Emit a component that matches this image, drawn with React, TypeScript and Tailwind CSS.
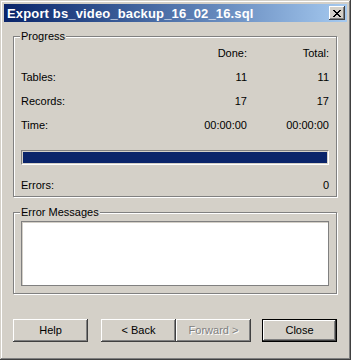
const font = { fontFamily: '"Liberation Sans", Arial, sans-serif' };

const raised =
  "bg-[#d4d0c8] shadow-[inset_-1px_-1px_#404040,inset_1px_1px_#ffffff,inset_-2px_-2px_#808080,inset_2px_2px_#d4d0c8]";

function GroupBox({ label, className, children }: { label: string; className?: string; children: React.ReactNode }) {
  return (
    <div
      className={
        "relative ml-[9px] w-[324px] border border-[#808080] shadow-[inset_1px_1px_#ffffff,1px_1px_#ffffff] " +
        (className ?? "")
      }
    >
      <span className="absolute left-[6px] top-[-8px] bg-[#d4d0c8] pr-[1px] pl-[1px] text-[11px] leading-[14px] text-black">
        {label}
      </span>
      {children}
    </div>
  );
}

function Row({ label, done, total }: { label: string; done?: string; total: string }) {
  return (
    <div className="flex h-[24px] items-center text-[11px] text-black">
      <span className="flex-1">{label}</span>
      <span className="w-[80px] text-right">{done}</span>
      <span className="w-[82px] text-right">{total}</span>
    </div>
  );
}

function Button({ label, disabled, isDefault }: { label: string; disabled?: boolean; isDefault?: boolean }) {
  const face = (
    <div
      className={
        raised +
        " flex h-full w-full items-center justify-center text-[11px] " +
        (disabled ? "text-[#808080] [text-shadow:1px_1px_#ffffff]" : "text-black")
      }
    >
      {label}
    </div>
  );
  if (isDefault) {
    return <div className="h-[23px] w-[75px] border border-black">{face}</div>;
  }
  return <div className="h-[23px] w-[75px]">{face}</div>;
}

export default function App() {
  return (
    <div
      style={font}
      className="h-[360px] w-[351px] bg-[#d4d0c8] p-[4px] shadow-[inset_-1px_-1px_#404040,inset_1px_1px_#d4d0c8,inset_-2px_-2px_#808080,inset_2px_2px_#ffffff]"
    >
      <div className="flex h-[18px] items-center justify-between bg-gradient-to-r from-[#0a246a] to-[#a6caf0] pl-[3px] pr-[2px]">
        <span className="text-[13px] font-bold leading-none tracking-[0.15px] text-white">
          Export bs_video_backup_16_02_16.sql
        </span>
        <div className={raised + " flex h-[14px] w-[16px] items-center justify-center"}>
          <svg width="8" height="7" viewBox="0 0 8 7" shapeRendering="crispEdges">
            <path
              d="M0 0h2v1h-2zM6 0h2v1h-2zM1 1h2v1h-2zM5 1h2v1h-2zM2 2h4v1h-4zM3 3h2v1h-2zM2 4h4v1h-4zM1 5h2v1h-2zM5 5h2v1h-2zM0 6h2v1h-2zM6 6h2v1h-2z"
              fill="#000"
            />
          </svg>
        </div>
      </div>

      <div className="pt-[14px]">
        <GroupBox label="Progress" className="h-[161px] px-[7px] pt-[4px]">
          <Row label="" done="Done:" total="Total:" />
          <Row label="Tables:" done="11" total="11" />
          <Row label="Records:" done="17" total="17" />
          <Row label="Time:" done="00:00:00" total="00:00:00" />
          <div className="mt-[13px] h-[15px] w-[308px] border-t border-l border-[#808080] border-r border-b border-r-white border-b-white bg-[#d4d0c8] p-[1px]">
            <div className="h-full w-full bg-[#0a246a]" />
          </div>
          <div className="mt-[11px] flex h-[18px] items-center text-[11px] text-black">
            <span className="flex-1">Errors:</span>
            <span>0</span>
          </div>
        </GroupBox>

        <GroupBox label="Error Messages" className="mt-[15px] h-[82px] px-[7px] pt-[8px]">
          <div className="h-[65px] w-[308px] border border-[#808080] bg-white shadow-[inset_1px_1px_#d4d0c8]" />
        </GroupBox>

        <div className="ml-[9px] mt-[25px] flex">
          <Button label="Help" />
          <div className="ml-[13px] flex">
            <Button label="< Back" />
            <Button label="Forward >" disabled />
          </div>
          <div className="ml-[11px]">
            <Button label="Close" isDefault />
          </div>
        </div>
      </div>
    </div>
  );
}
